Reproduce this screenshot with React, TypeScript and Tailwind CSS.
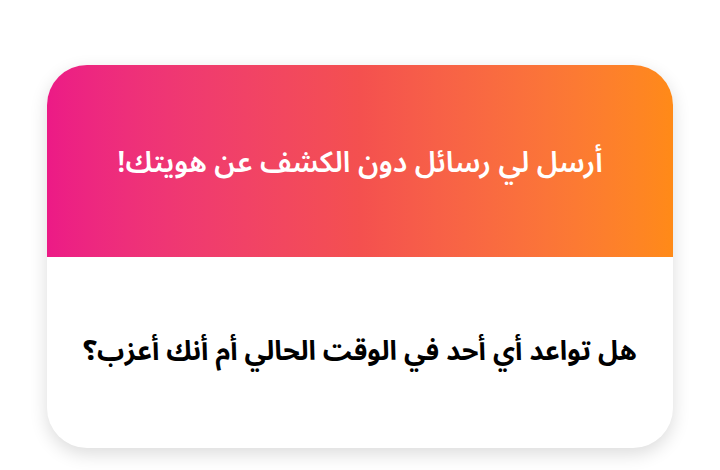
export default function App() {
  return (
    <div className="w-[720px] h-[470px] bg-white px-[47px] pt-[65px]" dir="rtl">
      <div className="rounded-[40px] overflow-hidden bg-white shadow-[0_6px_18px_rgba(0,0,0,0.14)] font-['Noto_Sans_Arabic','DejaVu_Sans',sans-serif]">
        <div className="h-[192px] flex items-center justify-center pt-[4px] bg-gradient-to-l from-[#ff8a17] via-[#f4504f] to-[#ec1a86]">
          <h2 className="text-white text-[29px] font-semibold">أرسل لي رسائل دون الكشف عن هويتك!</h2>
        </div>
        <div className="h-[191px] flex items-center justify-center">
          <p className="text-black text-[27px] font-bold">هل تواعد أي أحد في الوقت الحالي أم أنك أعزب؟</p>
        </div>
      </div>
    </div>
  );
}
